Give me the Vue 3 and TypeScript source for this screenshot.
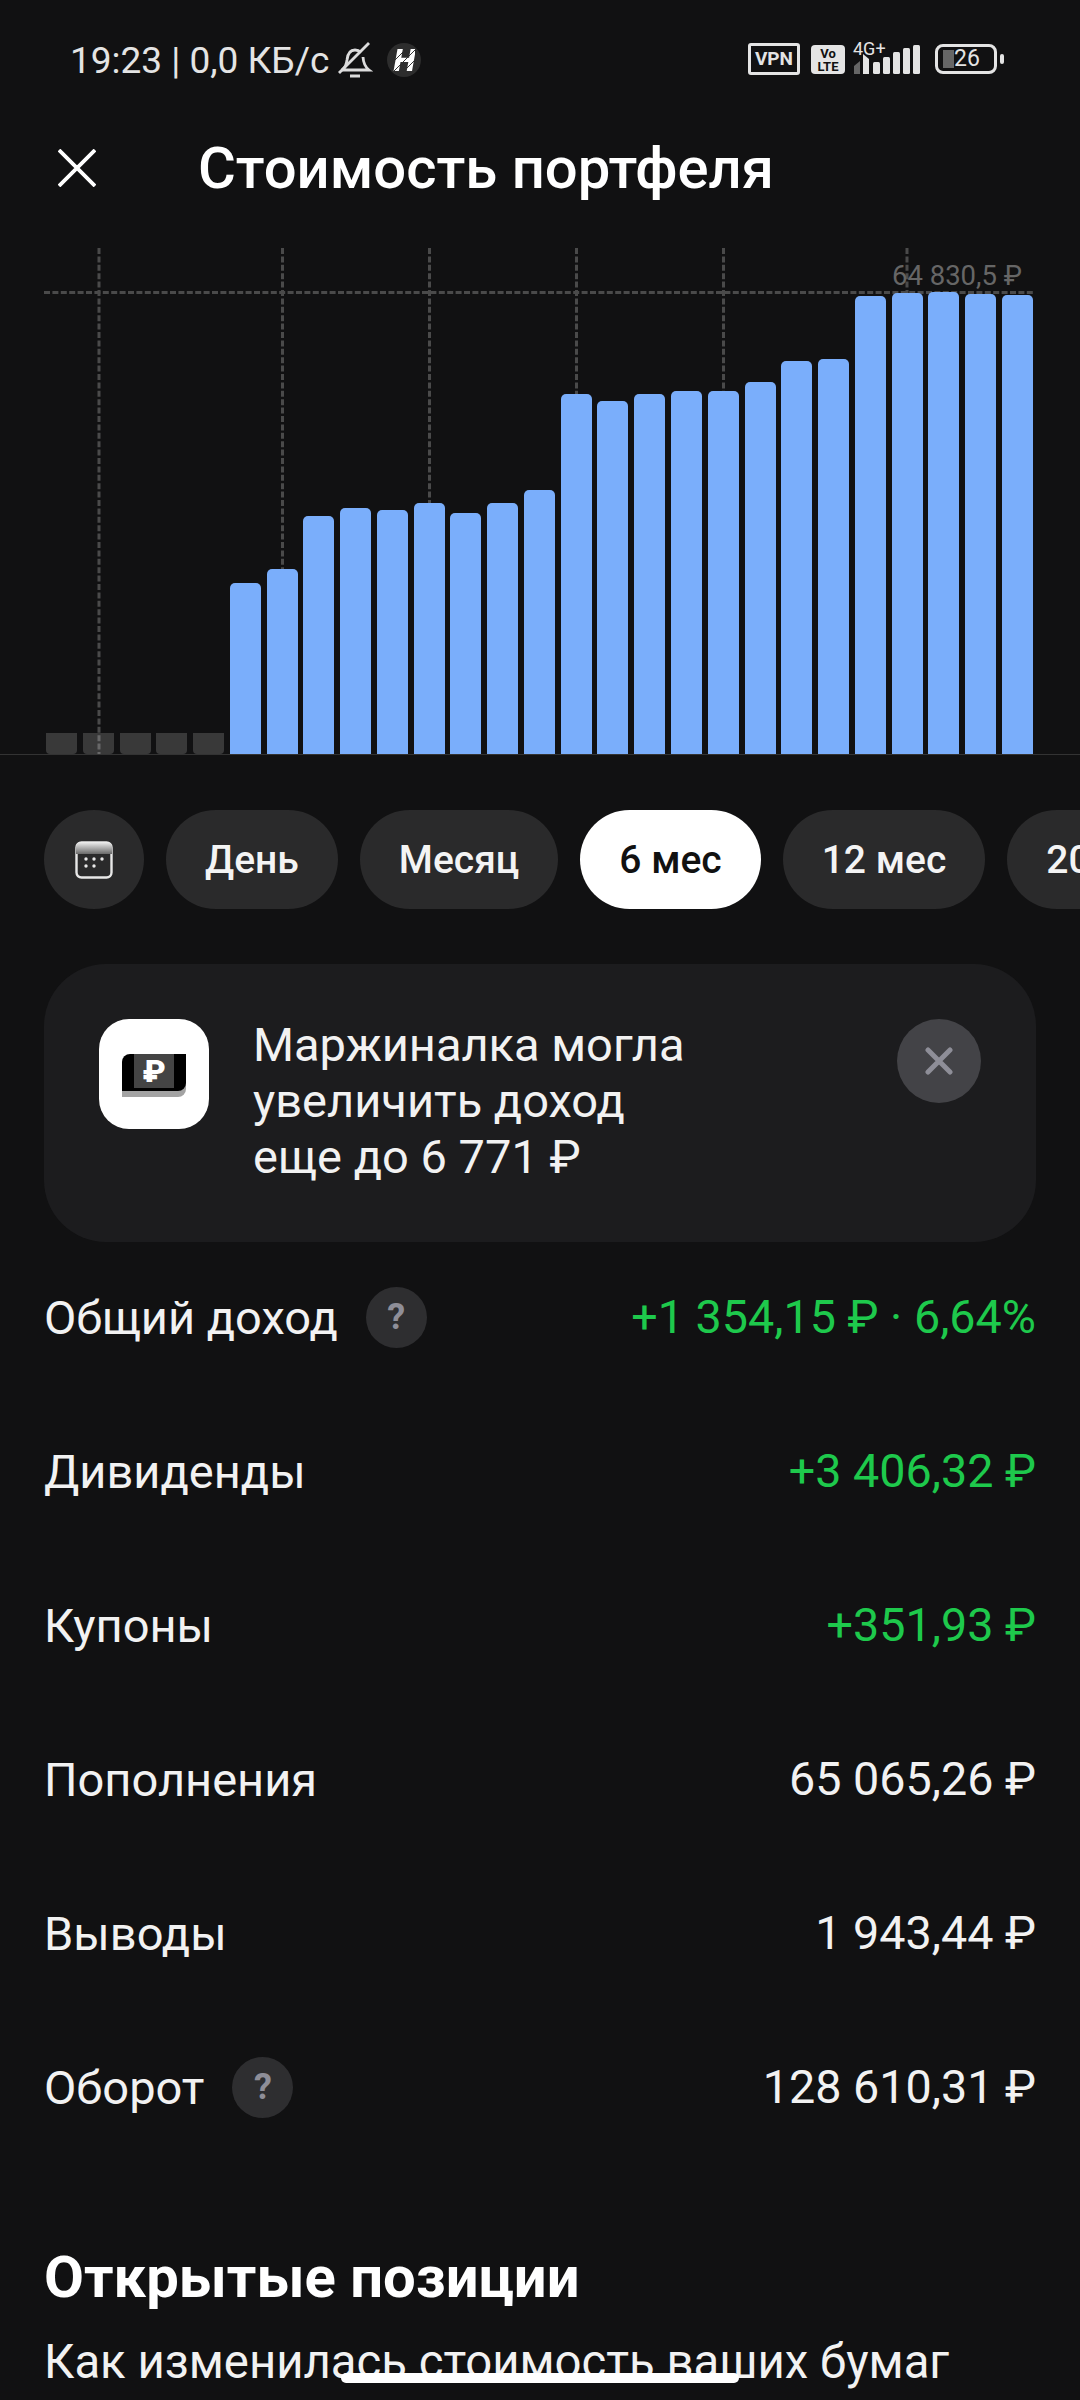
<template>
  <div class="screen">
    <!-- Status bar -->
    <div class="status-bar">
      <div class="status-left">
        <span class="status-text">19:23 | 0,0 КБ/с</span>
        <svg class="bell" viewBox="0 0 36 38" fill="none" stroke="#dcdcdc" stroke-width="2.800">
          <path d="M6 28c2.500-2 3.500-5 4-9 .6-6 3-10 8-10 2.500 0 4.500 1 6 2.500M26 16c.3 5 1.500 9.500 6 13H4" />
          <path d="M2 32L32 2" />
          <path d="M13 35h10" stroke-width="3" />
        </svg>
        <span class="h-badge"><span class="h-letter">H</span></span>
      </div>
      <div class="status-right">
        <span class="vpn">VPN</span>
        <span class="volte"><b>Vo</b><b>LTE</b></span>
        <div class="signal">
          <span class="net">4G+</span>
          <svg class="signal-bars" viewBox="0 0 68 30" fill="#e4e4e4">
            <path d="M1 21l6-5v13H1z" fill="#666" />
            <path d="M10 9l6 5v15h-6z" />
            <rect x="20" y="17" width="7" height="12" rx="1.500" />
            <rect x="30" y="12" width="7" height="17" rx="1.500" />
            <rect x="40" y="7" width="7" height="22" rx="1.500" />
            <rect x="50" y="3" width="7" height="26" rx="1.500" />
            <rect x="60" y="0" width="7" height="29" rx="1.500" />
          </svg>
        </div>
        <div class="battery">
          <div class="battery-body">
            <span class="battery-level"></span>
            <span class="battery-num">26</span>
          </div>
          <span class="battery-tip"></span>
        </div>
      </div>
    </div>

    <!-- Header -->
    <div class="header">
      <svg class="close-icon" viewBox="0 0 38 38" stroke="#fff" stroke-width="3.800">
        <path d="M1 1l36 36M37 1L1 37" />
      </svg>
      <h1 class="title">Стоимость портфеля</h1>
    </div>

    <!-- Chart -->
    <div class="chart">
      <svg class="guides" width="1080" height="506" fill="none" stroke="#4a4a4a" stroke-width="3">
        <path d="M44 44.500H1035" stroke-dasharray="6 2.400" />
        <path
          v-for="x in guideLines"
          :key="x"
          :d="`M${x} 0V506`"
          stroke-dasharray="6 2.400"
        />
      </svg>
      <span class="chart-max">64 830,5 ₽</span>
      <div class="bars">
        <div
          v-for="(bar, i) in bars"
          :key="i"
          class="bar"
          :class="{ empty: bar === 21 }"
          :style="{ height: bar + 'px' }"
        ></div>
      </div>
    </div>

    <!-- Period chips -->
    <div class="chips">
      <div class="chip chip-icon">
        <svg width="38" height="38" viewBox="0 0 38 38">
          <rect x="1.500" y="1.500" width="35" height="35" rx="5" fill="none" stroke="#e8e8e8" stroke-width="2.400" />
          <path d="M1 6a5 5 0 0 1 5-5h26a5 5 0 0 1 5 5v7H1z" fill="url(#calTop)" />
          <g fill="#e8e8e8">
            <circle cx="11" cy="18" r="1.700" /><circle cx="19" cy="18" r="1.700" /><circle cx="27" cy="18" r="1.700" />
            <circle cx="11" cy="25" r="1.700" /><circle cx="19" cy="25" r="1.700" />
          </g>
          <defs>
            <linearGradient id="calTop" x1="0" y1="0" x2="0" y2="1">
              <stop offset="0" stop-color="#f0f0f0" />
              <stop offset="1" stop-color="#6a6a6a" />
            </linearGradient>
          </defs>
        </svg>
      </div>
      <div
        v-for="chip in chips"
        :key="chip"
        class="chip"
        :class="{ active: chip === '6 мес' }"
      >
        {{ chip }}
      </div>
    </div>

    <!-- Margin banner -->
    <div class="banner">
      <div class="banner-logo">
        <div class="logo-card">
          <div class="logo-band">₽</div>
        </div>
      </div>
      <p class="banner-text">Маржиналка могла<br />увеличить доход<br />еще до 6 771 ₽</p>
      <div class="banner-close">
        <svg width="28" height="28" viewBox="0 0 28 28" stroke="#8e8e98" stroke-width="5" stroke-linecap="round">
          <path d="M3 3l22 22M25 3L3 25" />
        </svg>
      </div>
    </div>

    <!-- Stats -->
    <div class="stats">
      <div v-for="row in rows" :key="row.label" class="row">
        <div class="row-label">
          {{ row.label }}
          <span v-if="row.hint" class="hint">?</span>
        </div>
        <div class="row-value" :class="{ green: row.green }">{{ row.value }}</div>
      </div>
    </div>

    <!-- Open positions -->
    <div class="positions">
      <h2 class="positions-title">Открытые позиции</h2>
      <p class="positions-sub">Как изменилась стоимость ваших бумаг</p>
    </div>

    <div class="home-indicator"></div>
  </div>
</template>

<script setup lang="ts">
interface StatRow {
  label: string
  value: string
  green?: boolean
  hint?: boolean
}

const guideLines = [99, 282.5, 429.5, 576.5, 723.5, 907]

// bar tops were read off the chart, baseline is at y=754
const bars: number[] = [
  21, 21, 21, 21, 21,
  171, 185, 238, 246.5, 244.5, 251, 241, 251, 264,
  360.5, 353, 360, 363, 363.5, 372, 393, 395.5,
  458.5, 461, 462, 460.5, 459.5
]

const chips = ['День', 'Месяц', '6 мес', '12 мес', '2024']

const rows: StatRow[] = [
  { label: 'Общий доход', value: '+1 354,15 ₽ · 6,64%', green: true, hint: true },
  { label: 'Дивиденды', value: '+3 406,32 ₽', green: true },
  { label: 'Купоны', value: '+351,93 ₽', green: true },
  { label: 'Пополнения', value: '65 065,26 ₽' },
  { label: 'Выводы', value: '1 943,44 ₽' },
  { label: 'Оборот', value: '128 610,31 ₽', hint: true }
]
</script>

<style scoped>
.screen {
  position: relative;
  width: 1080px;
  height: 2400px;
  overflow: hidden;
  background: #111112;
  color: #fff;
  font-family: Roboto, "Liberation Sans", sans-serif;
}

/* Status bar */
.status-bar {
  height: 118px;
  box-sizing: border-box;
  padding: 40px 76px 0 70px;
  display: flex;
  justify-content: space-between;
  align-items: flex-start;
}

.status-left {
  display: flex;
  align-items: center;
  height: 40px;
}

.status-text {
  font-size: 37px;
  color: #e4e4e4;
  white-space: nowrap;
}

.bell {
  width: 36px;
  height: 38px;
  margin-left: 8px;
}

.h-badge {
  width: 34px;
  height: 34px;
  margin-left: 14px;
  border-radius: 50%;
  background: #2d2d2d;
  display: flex;
  align-items: center;
  justify-content: center;
}

.h-letter {
  font-size: 32px;
  font-weight: 900;
  font-style: italic;
  line-height: 34px;
  color: transparent;
  background: repeating-linear-gradient(135deg, #fff 0 6px, #333 6px 7px);
  -webkit-background-clip: text;
  background-clip: text;
}

.status-right {
  display: flex;
  align-items: center;
  height: 34px;
  margin-top: 2px;
}

.vpn {
  box-sizing: border-box;
  width: 52px;
  height: 32px;
  border: 3px solid #e4e4e4;
  border-radius: 3px;
  font-size: 19px;
  font-weight: 700;
  line-height: 26px;
  text-align: center;
  color: #e4e4e4;
}

.volte {
  width: 34px;
  height: 29px;
  margin-left: 11px;
  border-radius: 4px;
  background: #e4e4e4;
  color: #111;
  display: flex;
  flex-direction: column;
  align-items: center;
  font-size: 13px;
  line-height: 13px;
  padding-top: 2px;
  box-sizing: border-box;
}

.signal {
  position: relative;
  width: 68px;
  height: 32px;
  margin-left: 8px;
}

.net {
  position: absolute;
  left: 0;
  top: -3px;
  font-size: 18px;
  line-height: 18px;
  color: #e4e4e4;
}

.signal-bars {
  position: absolute;
  left: 0;
  bottom: 0;
  width: 68px;
  height: 30px;
}

.battery {
  display: flex;
  align-items: center;
  margin-left: 14px;
}

.battery-body {
  position: relative;
  box-sizing: border-box;
  width: 62px;
  height: 30px;
  border: 3px solid #e4e4e4;
  border-radius: 8px;
  padding-left: 16px;
}

.battery-level {
  position: absolute;
  left: 5px;
  top: 3px;
  width: 11px;
  height: 18px;
  background: #666;
}

.battery-num {
  position: relative;
  display: block;
  font-size: 23px;
  line-height: 24px;
  color: #e4e4e4;
}

.battery-tip {
  width: 4px;
  height: 10px;
  margin-left: 3px;
  border-radius: 2px;
  background: #e4e4e4;
}

/* Header */
.header {
  height: 100px;
  display: flex;
  align-items: center;
  padding-left: 58px;
}

.close-icon {
  width: 38px;
  height: 38px;
}

.title {
  margin: 0 0 0 102px;
  font-size: 58px;
  font-weight: 500;
  line-height: 64px;
}

/* Chart */
.chart {
  position: relative;
  height: 506px;
  margin-top: 30px;
  border-bottom: 1px solid #333;
}

.guides {
  position: absolute;
  left: 0;
  top: 0;
}

.chart-max {
  position: absolute;
  right: 58px;
  top: 12px;
  font-size: 27.500px;
  line-height: 32px;
  color: #666;
}

.bars {
  position: absolute;
  left: 46px;
  right: 47px;
  bottom: 0;
  display: flex;
  align-items: flex-end;
  justify-content: space-between;
}

.bar {
  width: 31px;
  background: #7aaefb;
  border-radius: 5px 5px 0 0;
}

.bar.empty {
  background: rgba(255, 255, 255, 0.17);
  border-radius: 0 0 4px 4px;
}

/* Chips */
.chips {
  display: flex;
  gap: 22px;
  margin-top: 55px;
  padding-left: 44px;
  overflow: hidden;
}

.chip {
  flex-shrink: 0;
  height: 99px;
  padding: 0 39px;
  border-radius: 50px;
  background: #2a2a2b;
  display: flex;
  align-items: center;
  font-size: 39px;
  font-weight: 500;
  color: #f4f4f4;
}

.chip.active {
  background: #fff;
  color: #111;
}

.chip-icon {
  width: 100px;
  padding: 0;
  justify-content: center;
  box-sizing: border-box;
}

/* Banner */
.banner {
  box-sizing: border-box;
  width: 992px;
  height: 278px;
  margin: 55px 0 0 44px;
  padding: 55px 55px 0;
  border-radius: 62px;
  background: #1c1c1e;
  display: flex;
  align-items: flex-start;
}

.banner-logo {
  width: 110px;
  height: 110px;
  flex-shrink: 0;
  border-radius: 30px;
  background: #fff;
  display: flex;
  align-items: center;
  justify-content: center;
}

.logo-card {
  width: 64px;
  height: 37px;
  margin-top: -3px;
  border-radius: 8px 0 8px 0;
  background: #000;
  box-shadow: 0 6px 0 #a3a3a3;
  display: flex;
  justify-content: center;
}

.logo-band {
  width: 40px;
  height: 34px;
  background: #444;
  color: #fff;
  font-size: 32px;
  font-weight: 900;
  line-height: 34px;
  text-align: center;
}

.banner-text {
  flex: 1;
  margin: -2px 0 0 44px;
  font-size: 47px;
  line-height: 56px;
  color: #f2f2f2;
}

.banner-close {
  width: 84px;
  height: 84px;
  flex-shrink: 0;
  border-radius: 50%;
  background: #434347;
  display: flex;
  align-items: center;
  justify-content: center;
}

/* Stats */
.stats {
  display: flex;
  flex-direction: column;
  gap: 94px;
  padding: 45px 44px 0;
}

.row {
  height: 60px;
  display: flex;
  align-items: center;
  justify-content: space-between;
  font-size: 47px;
}

.row-label {
  display: flex;
  align-items: center;
  gap: 28px;
  color: #f2f2f2;
}

.row-value {
  font-size: 46.700px;
  color: #f2f2f2;
}

.row-value.green {
  color: #1ec94c;
}

.hint {
  width: 61px;
  height: 61px;
  border-radius: 50%;
  background: #2e2e30;
  color: #8e8e98;
  font-size: 36px;
  font-weight: 700;
  line-height: 61px;
  text-align: center;
}

/* Positions */
.positions {
  padding: 128px 44px 0;
}

.positions-title {
  margin: 0;
  font-size: 58px;
  font-weight: 700;
  line-height: 64px;
}

.positions-sub {
  margin: 27px 0 0;
  font-size: 47.300px;
  line-height: 52px;
  color: #f2f2f2;
  white-space: nowrap;
}

.home-indicator {
  position: absolute;
  left: 341px;
  top: 2373px;
  width: 398px;
  height: 10px;
  border-radius: 5px;
  background: #fff;
}
</style>

<style>
html,
body {
  margin: 0;
  background: #111112;
}
</style>
